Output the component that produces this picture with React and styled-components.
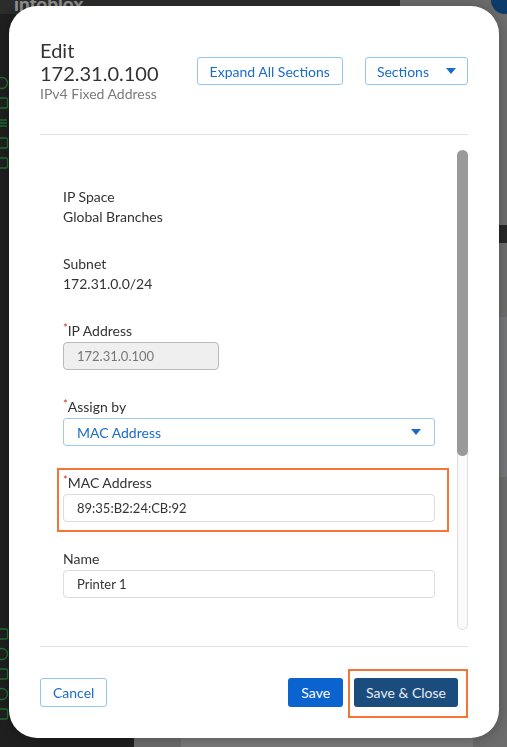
import React from "react";
import styled, { createGlobalStyle } from "styled-components";

const GlobalStyle = createGlobalStyle`
  html, body { margin: 0; padding: 0; }
  body {
    width: 507px;
    height: 747px;
    overflow: hidden;
    font-family: Lato, "Open Sans", "Liberation Sans", sans-serif;
    background: #6c6c6c;
  }
  * { box-sizing: border-box; }
`;

/* ---------- dimmed app behind the dialog ---------- */
const Backdrop = styled.div`
  width: 507px;
  height: 747px;
  display: grid;
  grid-template-columns: 134px 1fr;
  grid-template-rows: 14px 1fr;
  background: #6c6c6c;
`;

const TopBar = styled.div`
  grid-column: 1 / 3;
  display: flex;
  align-items: flex-start;
  background: #6a6a6a;
`;

const Brand = styled.div`
  width: 400px;
  height: 14px;
  background: #2c2c2c;
  color: #8e8e8e;
  font-weight: 900;
  font-size: 19px;
  line-height: 8px;
  padding-left: 14px;
  overflow: hidden;
`;

const Avatar = styled.div`
  margin-left: auto;
  margin-right: -12px;
  margin-top: -14px;
  width: 28px;
  height: 28px;
  border-radius: 50%;
  background: #0c3a6a;
`;

const Sidebar = styled.div`
  background: #1f1f1f;
  display: flex;
  flex-direction: column;
  padding-top: 62px;
  gap: 6px;
`;

const SideIcon = styled.svg`
  width: 14px;
  height: 14px;
  margin-left: -5px;
  flex: none;
`;

const SideSpacer = styled.div`
  flex: ${(p) => (p.$fixed ? "none" : "1")};
  height: ${(p) => (p.$fixed ? `${p.$fixed}px` : "auto")};
`;

const MainArea = styled.div`
  display: flex;
  flex-direction: column;
  background: #6c6c6c;
`;

const DarkBand = styled.div`
  height: 18px;
  margin-top: 211px;
  background: #262626;
`;

const LightPanel = styled.div`
  margin-top: 74px;
  height: 160px;
  background: #747679;
`;

const BottomPanel = styled.div`
  margin-top: auto;
  margin-left: 47px;
  width: 292px;
  height: 12px;
  background: #7a7a7a;
`;

/* ---------- dialog ---------- */
const Dialog = styled.div`
  position: fixed;
  left: 9px;
  top: 6px;
  width: 490px;
  height: 732px;
  background: #ffffff;
  border-radius: 28px;
  display: flex;
  flex-direction: column;
  box-shadow: 0 2px 12px rgba(0, 0, 0, 0.25);
  color: #333;
`;

const Header = styled.div`
  display: flex;
  align-items: flex-start;
  padding: 33px 31px 29px;
  height: 128px;
`;

const TitleBlock = styled.div`
  flex: 1;
  display: flex;
  flex-direction: column;
`;

const TitleLine = styled.div`
  font-size: 20px;
  line-height: 23px;
  color: #333;
`;

const Subtitle = styled.div`
  font-size: 14px;
  line-height: 17px;
  color: #7a7a7a;
`;

const HeaderActions = styled.div`
  display: flex;
  gap: 22px;
  margin-top: 18px;
`;

const OutlineButton = styled.button`
  height: ${(p) => p.$h || 28}px;
  padding: 0 ${(p) => p.$px || 12}px;
  border: 1px solid #93c4f2;
  border-radius: 3px;
  background: #fff;
  color: #1b6bcb;
  font-family: inherit;
  font-size: 14px;
  display: flex;
  align-items: center;
  gap: ${(p) => p.$gap || 0}px;
  cursor: pointer;
`;

const Caret = styled.svg`
  width: 10px;
  height: 6px;
  flex: none;
`;

const Divider = styled.div`
  height: 1px;
  margin: 0 31px;
  background: #e2e2e2;
  flex: none;
`;

const ScrollBody = styled.div`
  display: flex;
  align-items: flex-start;
  padding: 15px 31px 15px 31px;
  height: 511px;
`;

const Viewport = styled.div`
  flex: 1;
  height: 479px;
  overflow: hidden;
`;

const Fields = styled.div`
  display: flex;
  flex-direction: column;
  gap: 27px;
  padding: 37px 22px 0 23px;
`;

const InfoGroup = styled.div`
  display: flex;
  flex-direction: column;
  font-size: 14px;
  line-height: 20px;
  color: #333;
`;

const Field = styled.div`
  position: relative;
  display: flex;
  flex-direction: column;
  gap: 1px;

  ${(p) =>
    p.$highlight &&
    `
    &::after {
      content: "";
      position: absolute;
      top: -5px;
      left: -6px;
      right: -14px;
      bottom: -10px;
      border: 2px solid #f47535;
      pointer-events: none;
    }
  `}
`;

const Label = styled.label`
  display: flex;
  align-items: center;
  height: 20px;
  font-size: 14px;
  line-height: 20px;
  color: #333;
`;

const Required = styled.span`
  color: #e0262b;
  font-size: 11px;
  line-height: 10px;
  height: 10px;
  align-self: flex-start;
  margin-top: 2px;
`;

const Input = styled.div`
  height: 28px;
  width: ${(p) => (p.$w ? `${p.$w}px` : "100%")};
  border: 1px solid ${(p) => (p.$disabled ? "#b9b9b9" : "#dcdcdc")};
  border-radius: 4px;
  background: ${(p) => (p.$disabled ? "#efefef" : "#fff")};
  color: ${(p) => (p.$disabled ? "#777" : "#333")};
  font-size: 13px;
  display: flex;
  align-items: center;
  padding-left: 13px;
`;

const Select = styled.div`
  height: 28px;
  border: 1px solid #9ccaf2;
  border-radius: 3px;
  background: #fff;
  color: #1b6bcb;
  font-size: 14px;
  display: flex;
  align-items: center;
  justify-content: space-between;
  padding: 0 13px 0 13px;
`;

const Track = styled.div`
  width: 11px;
  height: 480px;
  border: 1px solid #dedede;
  border-radius: 6px;
  background: #fafafa;
  display: flex;
  flex-direction: column;
  flex: none;
`;

const Thumb = styled.div`
  height: 306px;
  margin: -1px -1px 0;
  border-radius: 6px;
  background: #9a9a9a;
`;

const Footer = styled.div`
  display: flex;
  align-items: center;
  justify-content: space-between;
  padding: 31px 41px 31px 31px;
  height: 91px;
`;

const FooterActions = styled.div`
  display: flex;
  gap: 11px;
`;

const SolidButton = styled.button`
  position: relative;
  height: 29px;
  padding: 0 ${(p) => p.$px || 13}px;
  border: none;
  border-radius: 3px;
  background: ${(p) => (p.$dark ? "#1b4c7e" : "#0a63cf")};
  color: ${(p) => (p.$dark ? "#e6ecf3" : "#ffffff")};
  font-family: inherit;
  font-size: 14px;
  cursor: pointer;

  ${(p) =>
    p.$highlight &&
    `
    &::after {
      content: "";
      position: absolute;
      top: -9px;
      left: -6px;
      right: -10px;
      bottom: -11px;
      border: 2px solid #f47535;
      pointer-events: none;
    }
  `}
`;

const CaretIcon = () => (
  <Caret viewBox="0 0 10 6">
    <path d="M0 0 L10 0 L5 6 Z" fill="#1b6bcb" />
  </Caret>
);

const GreenIcon = ({ kind }) => (
  <SideIcon viewBox="0 0 14 14">
    {kind === "circle" ? (
      <circle cx="7" cy="7" r="5.5" fill="none" stroke="#1e6e36" strokeWidth="1.4" />
    ) : kind === "lines" ? (
      <path d="M2 4 H12 M2 7 H12 M2 10 H12" stroke="#1e6e36" strokeWidth="1.4" />
    ) : (
      <rect x="1.5" y="2" width="11" height="10" rx="1.5" fill="none" stroke="#1e6e36" strokeWidth="1.4" />
    )}
  </SideIcon>
);

export default function App() {
  return (
    <>
      <GlobalStyle />
      <Backdrop>
        <TopBar>
          <Brand>infoblox</Brand>
          <Avatar />
        </TopBar>
        <Sidebar>
          <GreenIcon kind="circle" />
          <GreenIcon kind="box" />
          <GreenIcon kind="lines" />
          <GreenIcon kind="box" />
          <GreenIcon kind="box" />
          <SideSpacer />
          <GreenIcon kind="box" />
          <GreenIcon kind="circle" />
          <GreenIcon kind="box" />
          <GreenIcon kind="circle" />
          <GreenIcon kind="box" />
          <SideSpacer $fixed={20} />
        </Sidebar>
        <MainArea>
          <DarkBand />
          <LightPanel />
          <BottomPanel />
        </MainArea>
      </Backdrop>

      <Dialog role="dialog">
        <Header>
          <TitleBlock>
            <TitleLine>Edit</TitleLine>
            <TitleLine>172.31.0.100</TitleLine>
            <Subtitle>IPv4 Fixed Address</Subtitle>
          </TitleBlock>
          <HeaderActions>
            <OutlineButton $px={12}>Expand All Sections</OutlineButton>
            <OutlineButton $px={11} $gap={17}>
              Sections
              <CaretIcon />
            </OutlineButton>
          </HeaderActions>
        </Header>
        <Divider />
        <ScrollBody>
          <Viewport>
            <Fields>
              <InfoGroup>
                <span>IP Space</span>
                <span>Global Branches</span>
              </InfoGroup>
              <InfoGroup>
                <span>Subnet</span>
                <span>172.31.0.0/24</span>
              </InfoGroup>
              <Field>
                <Label>
                  <Required>*</Required>IP Address
                </Label>
                <Input $disabled $w={156}>172.31.0.100</Input>
              </Field>
              <Field>
                <Label>
                  <Required>*</Required>Assign by
                </Label>
                <Select>
                  MAC Address
                  <CaretIcon />
                </Select>
              </Field>
              <Field $highlight>
                <Label>
                  <Required>*</Required>MAC Address
                </Label>
                <Input>89:35:B2:24:CB:92</Input>
              </Field>
              <Field>
                <Label>Name</Label>
                <Input>Printer 1</Input>
              </Field>
              <Field>
                <Label>Comment</Label>
                <Input />
              </Field>
            </Fields>
          </Viewport>
          <Track>
            <Thumb />
          </Track>
        </ScrollBody>
        <Divider />
        <Footer>
          <OutlineButton $h={29} $px={12}>Cancel</OutlineButton>
          <FooterActions>
            <SolidButton $px={13}>Save</SolidButton>
            <SolidButton $dark $highlight $px={12}>
              Save &amp; Close
            </SolidButton>
          </FooterActions>
        </Footer>
      </Dialog>
    </>
  );
}
